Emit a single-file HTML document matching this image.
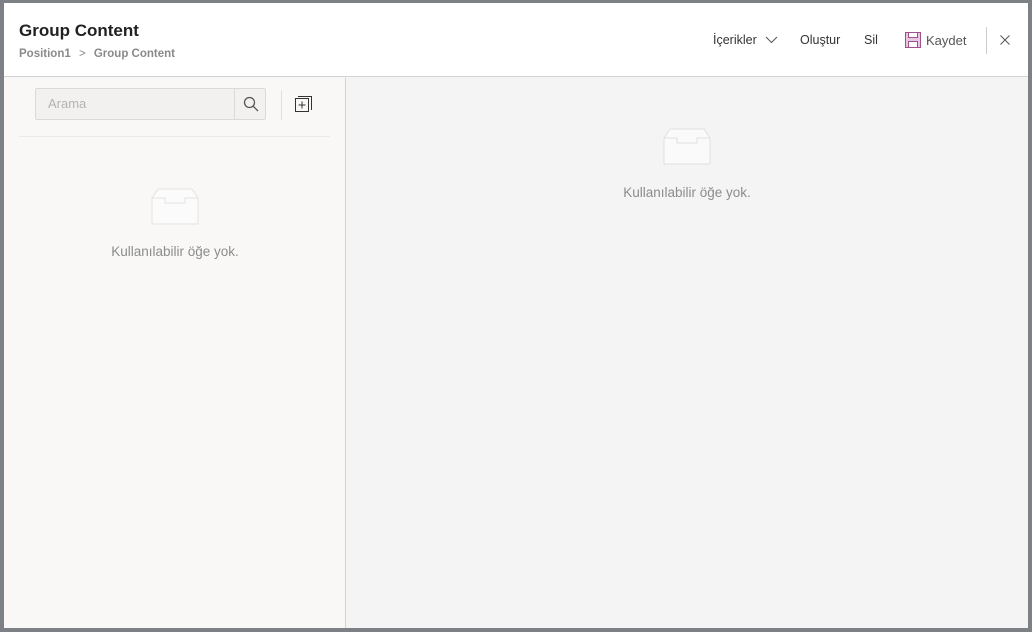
<!DOCTYPE html>
<html><head><meta charset="utf-8"><style>
*{box-sizing:border-box;margin:0;padding:0}
body{width:1032px;height:632px;background:#7d8085;font-family:"Segoe UI","Liberation Sans",sans-serif;position:relative;overflow:hidden}
#win{position:absolute;left:4px;top:3px;width:1024px;height:625px;background:#f4f4f4}
#hdr{position:absolute;left:0;top:0;width:1024px;height:74px;background:#fff;border-bottom:1px solid #d3d3d3}
.t{position:absolute;left:15px;top:18px;font-size:17px;font-weight:600;color:#222}
.bc{position:absolute;left:15px;top:45px;font-size:11.5px;font-weight:600;color:#8a8a8a}
.tb{position:absolute;top:30px;font-size:12.5px;color:#333}
#left{position:absolute;left:0;top:75px;width:342px;height:550px;background:#f9f8f7;border-right:1px solid #d3d3d3}
.search{position:absolute;left:31px;top:10px;width:231px;height:32px;border:1px solid #dadada;background:#f2f1f0;border-radius:2px}
.search span{position:absolute;left:12px;top:7px;font-size:13px;color:#b3b3b3}
.search .sb{position:absolute;right:0;top:0;width:31px;height:30px;border-left:1px solid #dadada}
.empty{position:absolute;font-size:13px;color:#8c8c8c;text-align:center;width:200px}
</style></head><body>
<div id="win">
<div id="hdr">
<div class="t">Group Content</div>
<div class="bc">Position1 <span style="font-weight:400;margin:0 5px">&gt;</span> Group Content</div>
<div class="tb" style="left:709px">İçerikler</div>
<svg style="position:absolute;left:761px;top:33px" width="13" height="8"><path d="M1 1L6.5 6.5L12 1" stroke="#555" fill="none"/></svg>
<div class="tb" style="left:796px">Oluştur</div>
<div class="tb" style="left:860px">Sil</div>
<svg style="position:absolute;left:901px;top:29px" width="16" height="16"><rect x="0.5" y="0.5" width="15" height="15" fill="#e8c8e0" stroke="#a05090"/><rect x="3.5" y="0.5" width="9" height="5" fill="#fff" stroke="#a05090"/><rect x="3.5" y="9.5" width="9" height="6" fill="#fff" stroke="#a05090"/></svg>
<div class="tb" style="left:922px;color:#555;font-size:13px">Kaydet</div>
<div style="position:absolute;left:982px;top:24px;width:1px;height:27px;background:#ccc"></div>
<svg style="position:absolute;left:996px;top:32px" width="10" height="10"><path d="M0.5 0.5L9.5 9.5M9.5 0.5L0.5 9.5" stroke="#555"/></svg>
</div>
<div id="left">
<div class="search"><span>Arama</span><div class="sb"><svg style="position:absolute;left:8px;top:7px" width="16" height="16"><circle cx="6.5" cy="6.5" r="5" stroke="#555" fill="none" stroke-width="1.3"/><path d="M10 10L15 15" stroke="#555" stroke-width="1.3"/></svg></div></div>
<div style="position:absolute;left:277px;top:12px;width:1px;height:30px;background:#e0e0e0"></div>
<svg style="position:absolute;left:291px;top:18px" width="17" height="17"><rect x="0.5" y="2.5" width="13" height="13" fill="none" stroke="#333"/><path d="M3 0.5H16.5V14" fill="none" stroke="#333"/><path d="M7 5.5V12.5M3.5 9H10.5" stroke="#333"/></svg>
<div style="position:absolute;left:15px;top:58px;width:311px;height:1px;background:#ebebeb"></div>
<svg style="position:absolute;left:147px;top:110px" width="48" height="38"><path d="M7 1H41L47 10V36H1V10Z" fill="#fbfbfb" stroke="#e3e3e3"/><path d="M1 10H14V15H34V10H47" fill="none" stroke="#e3e3e3"/></svg>
<div class="empty" style="left:71px;top:166px;font-size:13.5px">Kullanılabilir öğe yok.</div>
</div>
<svg style="position:absolute;left:659px;top:125px" width="48" height="38"><path d="M7 1H41L47 10V36H1V10Z" fill="#fafafa" stroke="#e0e0e0"/><path d="M1 10H14V15H34V10H47" fill="none" stroke="#e0e0e0"/></svg>
<div class="empty" style="left:583px;top:182px;font-size:13.5px">Kullanılabilir öğe yok.</div>
</div>
</body></html>
